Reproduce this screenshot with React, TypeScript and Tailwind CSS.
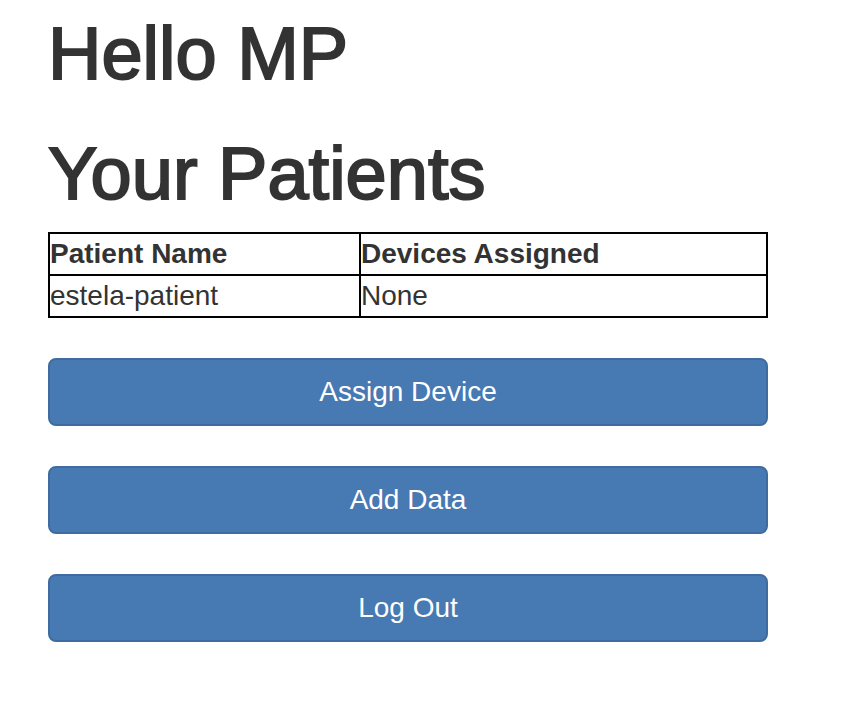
import React from "react";

const patients = [{ name: "estela-patient", devices: "None" }];
const actions = ["Assign Device", "Add Data", "Log Out"];

export default function App() {
  return (
    <main className="min-h-screen bg-white pl-12 pr-[94px] pt-[14px] pb-10 font-['Liberation_Sans',Arial,sans-serif] text-[28px] leading-10 text-[#333333]">
      <h1 className="mb-10 text-[74px] font-medium leading-[80px] [-webkit-text-stroke:2px_#333333]">Hello MP</h1>
      <h1 className="mb-[18px] text-[74px] font-medium leading-[80px] [-webkit-text-stroke:2px_#333333]">Your Patients</h1>
      <table className="w-full border-collapse border-2 border-black">
        <thead>
          <tr>
            <th className="w-[311px] border-2 border-black p-0 text-left font-bold">Patient Name</th>
            <th className="border-2 border-black p-0 text-left font-bold">Devices Assigned</th>
          </tr>
        </thead>
        <tbody>
          {patients.map((p) => (
            <tr key={p.name}>
              <td className="border-2 border-black p-0">{p.name}</td>
              <td className="border-2 border-black p-0">{p.devices}</td>
            </tr>
          ))}
        </tbody>
      </table>
      <div className="mt-10 flex flex-col gap-10">
        {actions.map((label) => (
          <button
            key={label}
            type="button"
            className="w-full rounded-lg border-2 border-[#3f6ca0] bg-[#4779b3] py-3 text-center text-white"
          >
            {label}
          </button>
        ))}
      </div>
    </main>
  );
}
